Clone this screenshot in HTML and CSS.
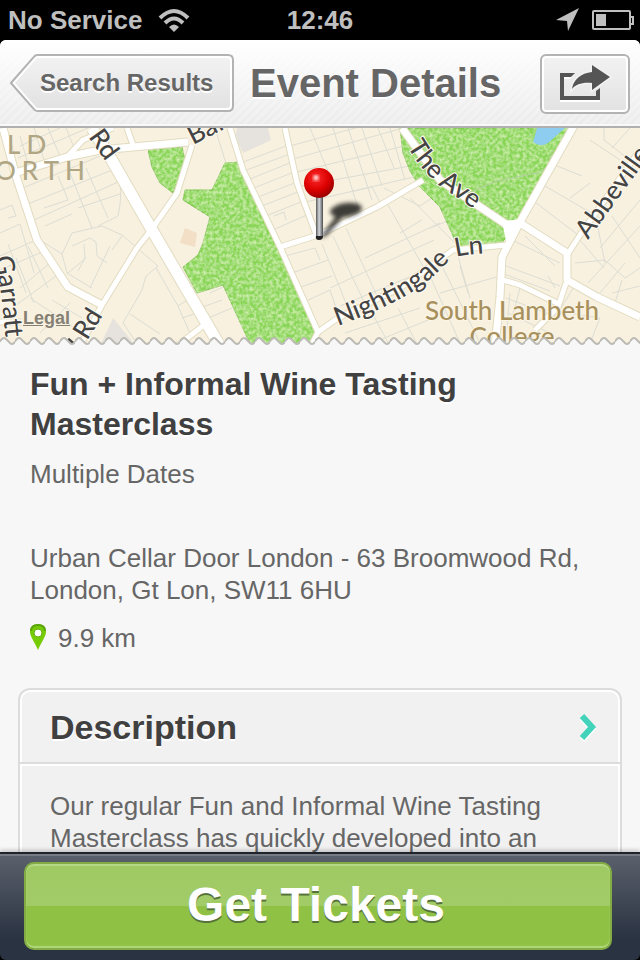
FILE: index.html
```html
<!DOCTYPE html>
<html lang="en">
<head>
    <meta charset="UTF-8">
    <meta name="viewport" content="width=device-width, initial-scale=1">
    <title>Event Details</title>
    <link rel="stylesheet" href="styles.css">
</head>
<body>

    <div class="status">
        <div class="status-left">
            <span>No Service</span>
            <svg width="34" height="26" viewBox="0 0 34 26">
                <g fill="none" stroke="#bfbfbf" stroke-width="4">
                    <path d="M2 11 Q16 -3 30 11"/>
                    <path d="M7 16 Q16 7 25 16"/>
                </g>
                <path d="M11 20 Q16 15 21 20 L16 25Z" fill="#bfbfbf"/>
            </svg>
        </div>
        <span>12:46</span>
        <div class="status-right">
            <svg width="24" height="24" viewBox="0 0 24 24"><path d="M23 0 L12 23 L11 13 L0 12Z" fill="#bfbfbf"/></svg>
            <svg width="42" height="22" viewBox="0 0 42 22">
                <rect x="1" y="2" width="37" height="18" rx="1" fill="none" stroke="#bfbfbf" stroke-width="2"/>
                <path d="M38 8h3v7h-3" fill="none" stroke="#bfbfbf" stroke-width="2"/>
                <rect x="4" y="5" width="10" height="12" fill="#bfbfbf"/>
            </svg>
        </div>
    </div>

    <header class="nav">
        <button class="back" type="button">
            <svg class="back-shape" viewBox="0 0 224 58">
                <defs>
                    <linearGradient id="btn" x1="0" y1="0" x2="0" y2="1">
                        <stop offset="0" stop-color="#f2f2f2"/>
                        <stop offset="1" stop-color="#e2e2e2"/>
                    </linearGradient>
                </defs>
                <path d="M27 1 H218 Q223 1 223 6 V52 Q223 57 218 57 H27 Q25 57 23 54 L1 29 L23 4 Q25 1 27 1Z" fill="#fff" stroke="#b3b3b3" stroke-width="2"/>
                <path d="M28 4 H217 Q220 4 220 7 V51 Q220 54 217 54 H28 Q26 54 25 52 L5 29 L25 6 Q26 4 28 4Z" fill="url(#btn)"/>
            </svg>
            <span>Search Results</span>
        </button>
        <h1>Event Details</h1>
        <button class="share" type="button" aria-label="Share">
            <svg width="54" height="42" viewBox="0 0 54 42">
                <path d="M2 12 H16 L12 16 H6 V36 H38 V29 L42 26 V39 H2Z" fill="#fff"/>
                <path d="M2 10 H17 L13 14 H6 V33 H38 V28 L42 25 V37 H2Z" fill="#555"/>
                <path d="M34 2 L52 14 L34 27 V20 C25 19 18 21 14 26 C15 17 23 10 34 9Z" fill="#555" stroke="#f2f2f2" stroke-width="3" paint-order="stroke"/>
            </svg>
        </button>
    </header>

    <div class="map">
        <svg class="map-art" viewBox="0 0 640 218" preserveAspectRatio="xMidYMin slice">
            <defs>
                <filter id="grass" x="0" y="0" width="1" height="1">
                    <feTurbulence type="fractalNoise" baseFrequency="0.3" numOctaves="2" seed="4"/>
                    <feColorMatrix values="0 0 0 0 .72  0 0 0 0 .91  0 0 0 0 .5  0 1.6 0 0 -.55"/>
                    <feComposite operator="in" in2="SourceGraphic"/>
                    <feMerge><feMergeNode in="SourceGraphic"/><feMergeNode/></feMerge>
                </filter>
                <filter id="soft"><feGaussianBlur stdDeviation="2"/></filter>
                <radialGradient id="ball" cx=".4" cy=".32" r=".7">
                    <stop offset="0" stop-color="#ffb0b0"/>
                    <stop offset=".16" stop-color="#f42020"/>
                    <stop offset=".6" stop-color="#dc0000"/>
                    <stop offset="1" stop-color="#960000"/>
                </radialGradient>
                <linearGradient id="stem">
                    <stop offset="0" stop-color="#555"/>
                    <stop offset=".45" stop-color="#d5d8dc"/>
                    <stop offset="1" stop-color="#4a4c50"/>
                </linearGradient>
                <path id="lnPath" d="M338 198 C375 184 415 168 441 141 Q452 128 466 127 L500 124"/>
                <path id="avePath" d="M407 18 Q421 43 443 60 L490 92"/>
                <path id="garPath" d="M-6 129 Q0 155 2 175 L8 235"/>
            </defs>

            <rect width="640" height="218" fill="#f8f1df"/>

            <!-- blocks -->
            <path d="M235 9 L237 0 H268 L271 12 L243 25Z M100 218 L113 190 L136 218Z" fill="#e6e2dd"/>
            <path d="M185 100 L197 105 L195 119 L180 115Z" fill="#f2dfc6"/>

            <!-- side streets -->
            <g class="minor">
                <path d="M20 18 L60 0 M18 30 L88 0 M28 36 L20 8 M44 32 L34 0 M60 28 L48 0 M75 22 L66 0 M105 18 L98 0"/>
                <path d="M23 60 L100 28 M28 76 L112 42 M34 92 L118 54 M70 45 L92 100 M58 48 L68 72 L44 80 M78 80 L120 66 M98 98 L118 88 Q122 70 120 55 M86 40 L108 90 M45 98 L72 86"/>
                <path d="M0 82 L12 77 L16 88 L8 90 M0 105 L20 96 L34 145 M0 128 L36 112 M0 142 L42 124 M20 160 L50 135 M12 180 L56 148 M8 116 L26 165 M28 118 L48 160 M16 130 L34 175"/>
                <path d="M40 112 L62 126 L72 105 L102 98 L122 107 L158 138 M62 126 L67 145 L92 160 M72 118 L90 110 L96 114 L97 128 L107 135 M84 116 L85 130 L78 143 M110 118 L90 160 M68 145 L86 130 M122 108 L112 122"/>
                <path d="M158 138 L146 148 L142 162 L123 195 L136 214 M156 140 L178 178 L192 210 M130 186 L160 206 M178 178 L190 170 M182 190 L194 186 M30 170 L75 200 M70 175 L40 205 M52 172 L82 190 M200 180 L222 172 M208 190 L232 180"/>
                <path d="M215 0 L228 42 M238 36 L286 18 M241 44 L290 26 M245 53 L292 34 M249 62 L294 44 M253 71 L297 54 M257 80 L300 63 M261 90 L303 73 M273 102 L309 86 M274 88 L284 84 L286 92 M210 165 L232 155"/>
                <path d="M290 18 L420 -18 M293 31 L403 0 M297 44 L404 18 M301 58 L410 38 M306 74 L418 48 M310 0 L330 48 M333 0 L358 80 M348 0 L372 72 M362 0 L382 58 M378 0 L394 40 M390 0 L405 52 M350 64 L372 59 L383 80"/>
                <path d="M322 116 L350 185 M333 108 L366 178 M346 100 L378 170 M388 77 L424 140 M330 160 L434 112 M340 178 L450 132 M365 130 L440 95 M400 105 L422 92 M285 128 L315 120 L320 132 M292 145 L328 132 M298 160 L332 148 M304 174 L330 162 L336 180 M384 60 L420 78 L438 66"/>
                <path d="M345 205 L420 180 M365 218 L445 185 M372 185 L390 218 M398 180 L418 218 M430 148 L460 215 M443 140 L480 215 M455 118 L470 170 M440 165 L500 148 M460 138 L468 165 M410 70 L458 118 M430 100 L450 92"/>
                <path d="M506 138 L560 158 M504 146 L550 163 M512 112 L560 135 M525 108 L555 138 M506 170 L560 190 M508 185 L550 205 M548 148 L555 160 M510 165 L506 210 M555 183 L600 190 L590 215 M575 157 L560 182 M520 160 L512 190"/>
                <path d="M552 36 L582 48 M545 58 L600 90 M535 74 L582 110 M570 70 L590 55 M604 0 V12 L640 40 M590 12 L620 32 M630 0 L612 20 M598 100 L605 135 M612 88 L640 130 M600 120 L640 72 M588 155 L640 98 M575 135 L605 132 L625 150 L640 140 M600 165 L625 135 M615 175 L622 152 M612 165 L640 158 M580 112 L604 140"/>
            </g>

            <!-- parks and pond -->
            <g fill="#89d656" stroke="#7dbf50" filter="url(#grass)">
                <path d="M148 22 L182 19 L185 32 L173 65 L160 55 L152 39Z"/>
                <path d="M225 35 L240 34 L280 119 L318 204 L311 218 H251 L223 157 L197 165 L183 139 L198 127 L203 115 L210 89 L183 72 L185 62 H212Z"/>
                <path d="M400 0 H572 L520 92 L500 117 L458 119 L440 79 L420 59 L410 43 L403 25Z"/>
            </g>
            <path d="M537 0 H565 L548 15 Q540 20 533 14Z" fill="#8fcdf0"/>
            <path d="M468 65 L497 53 L537 45 L547 39 L553 22" fill="none" stroke="#b4cfa0"/>

            <!-- main roads: casing first, then the white fill -->
            <g class="casing">
                <path class="w12" d="M92 0 L110 29 L152 102 L187 162 L220 218"/>
                <path class="w8" d="M3 0 L15 45 L37 112 L68 159 L102 177 M15 45 L67 29 L100 22 L188 14 M402 0 L440 52 L507 97 M575 -4 L520 94 L502 129 L500 169 L495 218 M520 95 L567 125 V152 L597 169 L640 189"/>
                <path class="w6" d="M67 29 L83 12 L113 0 M127 0 L133 17 M192 17 L177 65 L152 101 L137 120 L102 177 L80 218 M230 0 L243 42 L280 119 L318 204 L311 218 M285 0 L297 55 L317 109 M280 119 L318 107 L377 79 L423 52 M318 204 L338 190 L400 160 L453 122 L507 117 M567 127 L580 107 L640 22 M503 152 L520 157 L557 175 M566 155 L558 179 L535 202 M177 218 L208 194 M0 194 H22"/>
            </g>
            <g class="road">
                <path class="w12" d="M92 0 L110 29 L152 102 L187 162 L220 218"/>
                <path class="w8" d="M3 0 L15 45 L37 112 L68 159 L102 177 M15 45 L67 29 L100 22 L188 14 M402 0 L440 52 L507 97 M575 -4 L520 94 L502 129 L500 169 L495 218 M520 95 L567 125 V152 L597 169 L640 189"/>
                <path class="w6" d="M67 29 L83 12 L113 0 M127 0 L133 17 M192 17 L177 65 L152 101 L137 120 L102 177 L80 218 M230 0 L243 42 L280 119 L318 204 L311 218 M285 0 L297 55 L317 109 M280 119 L318 107 L377 79 L423 52 M318 204 L338 190 L400 160 L453 122 L507 117 M567 127 L580 107 L640 22 M503 152 L520 157 L557 175 M566 155 L558 179 L535 202 M177 218 L208 194 M0 194 H22"/>
                <path d="M503 94 L522 92 L516 104 L507 112Z" fill="#fff" stroke-width="2"/>
            </g>

            <g class="label">
                <text transform="translate(88 9) rotate(54)">Rd</text>
                <text transform="translate(193 17) rotate(-27)">Bal</text>
                <text transform="translate(87 213) rotate(-58)">Rd</text>
                <path d="M68 211 L75 217" stroke="#444" stroke-width="3"/>
                <text transform="translate(588 112) rotate(-54)">Abbeville</text>
                <text><textPath href="#lnPath">Nightingale Ln</textPath></text>
                <text><textPath href="#avePath">The Ave</textPath></text>
                <text><textPath href="#garPath">Garratt</textPath></text>
            </g>
            <g class="place">
                <text x="512" y="192" text-anchor="middle">South Lambeth</text>
                <text x="512" y="218" text-anchor="middle">College</text>
            </g>
            <g class="district">
                <text x="7" y="26">LD</text>
                <text x="-5" y="52">ORTH</text>
            </g>

            <!-- pin -->
            <g filter="url(#soft)" opacity=".75">
                <ellipse cx="346" cy="82" rx="16" ry="7" transform="rotate(-8 346 82)"/>
                <path d="M320 110 L336 88 L344 88 L326 108Z"/>
            </g>
            <path d="M316 66 H323 V109 Q319 113 316 109Z" fill="url(#stem)"/>
            <path d="M316 108 H323 Q323 112 319 112 T316 108Z" fill="#222"/>
            <circle cx="319" cy="55" r="15" fill="url(#ball)"/>
            <circle cx="316" cy="50" r="3" fill="#fff" opacity=".7" filter="url(#soft)"/>
        </svg>
        <a class="legal" href="#">Legal</a>
        <svg class="tear" width="100%" height="10">
            <defs>
                <pattern id="wave" width="15" height="10" patternUnits="userSpaceOnUse">
                    <path d="M-3 8 L2 3 Q4 1 6 3 L10 7 Q12 9 14 7 L18 3 V11 H-3Z" fill="#f7f7f7" stroke="#bdbbb6" stroke-width="2"/>
                </pattern>
            </defs>
            <rect width="100%" height="10" fill="url(#wave)"/>
        </svg>
    </div>

    <main>
        <section class="event">
            <h2>Fun + Informal Wine Tasting Masterclass</h2>
            <p class="dates">Multiple Dates</p>
            <p class="address">Urban Cellar Door London - 63 Broomwood Rd, London, Gt Lon, SW11 6HU</p>
            <p class="distance">
                <svg width="16" height="28" viewBox="0 0 16 28">
                    <path d="M8 0 C13 0 16 4 16 8 C16 12 12 17 8 26 C4 17 0 12 0 8 C0 4 3 0 8 0Z" fill="#76cc05"/>
                    <path d="M1 7 C1 3 4 1 8 1 S15 3 15 7" fill="none" stroke="#5aa30c" stroke-width="2"/>
                    <circle cx="8" cy="9" r="4" fill="#fff" stroke="#61ad0c"/>
                </svg>
                <span>9.9 km</span>
            </p>
        </section>

        <section class="card">
            <a class="card-head" href="#">
                <h3>Description</h3>
                <svg width="20" height="32" viewBox="0 0 20 32">
                    <path d="M2 7 L12 18 L2 29" fill="none" stroke="#fff" stroke-width="6"/>
                    <path d="M2 5 L12 16 L2 27" fill="none" stroke="#43d3ba" stroke-width="6"/>
                </svg>
            </a>
            <p>Our regular Fun and Informal Wine Tasting Masterclass has quickly developed into an</p>
        </section>
    </main>

    <footer>
        <button class="tickets" type="button">Get Tickets</button>
    </footer>

</body>
</html>
```
FILE: styles.css
```css
* {
    box-sizing: border-box;
}

body {
    margin: 0;
    height: 100vh;
    display: flex;
    flex-direction: column;
    background: #000;
    font-family: "Liberation Sans", Arial, sans-serif;
    color: #666;
}

h1, h2, h3, p {
    margin: 0;
}

button {
    font-family: inherit;
    cursor: pointer;
}

svg {
    display: block;
}

/* status bar */
.status {
    height: 40px;
    flex: none;
    display: grid;
    grid-template-columns: 1fr auto 1fr;
    align-items: center;
    padding: 0 8px;
    background: #000;
    color: #bfbfbf;
    font-size: 26px;
    font-weight: bold;
}

.status-left,
.status-right {
    display: flex;
    align-items: center;
    gap: 16px;
}

.status-right {
    justify-content: flex-end;
    gap: 12px;
    margin-right: -2px;
}

/* navigation bar */
.nav {
    height: 88px;
    flex: none;
    display: flex;
    align-items: flex-start;
    gap: 16px;
    padding: 14px 10px 0;
    border-bottom: 2px solid #b0b0b0;
    border-radius: 6px 6px 0 0;
    background:
        linear-gradient(rgba(255, 255, 255, 1), rgba(255, 255, 255, .2)),
        repeating-linear-gradient(135deg, #e6e6e6 0, #e6e6e6 2px, #ececec 3px, #ececec 6px);
    box-shadow: inset 0 -2px 0 #f8f8f8;
}

.back {
    position: relative;
    width: 224px;
    height: 58px;
    padding: 0 0 0 30px;
    border: 0;
    background: none;
    color: #666;
    font-size: 24px;
    font-weight: bold;
    text-align: left;
    text-shadow: 0 2px 0 #fff;
}

.back-shape {
    position: absolute;
    left: 0;
    top: 0;
    width: 100%;
}

.back span {
    position: relative;
}

.nav h1 {
    flex: 1;
    font-size: 40px;
    line-height: 58px;
    white-space: nowrap;
    text-shadow: 0 2px 0 #fff;
}

.share {
    width: 90px;
    height: 60px;
    display: flex;
    align-items: center;
    justify-content: center;
    padding: 0;
    border: 2px solid #b3b3b3;
    border-radius: 6px;
    background: linear-gradient(#f2f2f2, #e2e2e2);
    box-shadow: inset 0 0 0 2px #fff;
}

/* map */
.map {
    position: relative;
    flex: none;
    height: 218px;
    overflow: hidden;
    background: #f8f1df;
}

.map-art {
    width: 100%;
    height: 100%;
}

.minor {
    fill: none;
    stroke: #dcddd4;
    stroke-width: 1;
}

.casing,
.road {
    fill: none;
    stroke-linejoin: round;
}

.casing { stroke: #e2dcc0; }
.road { stroke: #fff; }

.casing .w12 { stroke-width: 13px; }
.casing .w8 { stroke-width: 9px; }
.casing .w6 { stroke-width: 7px; }
.road .w12 { stroke-width: 11px; }
.road .w8 { stroke-width: 7px; }
.road .w6 { stroke-width: 5px; }

.label,
.place,
.district {
    font-family: Lato, sans-serif;
    font-size: 26px;
    font-weight: 500;
    paint-order: stroke;
}

.label {
    fill: #444;
}

.label text {
    stroke: #fffaf0;
    stroke-width: 2px;
}

.place {
    fill: #a8905c;
    stroke: #fbf5e6;
    stroke-width: 2px;
}

.district {
    fill: #b0a684;
    letter-spacing: 6px;
}

.legal {
    position: absolute;
    left: 23px;
    top: 180px;
    color: #858074;
    font-size: 18px;
    font-weight: bold;
}

.tear {
    position: absolute;
    left: 0;
    bottom: 0;
}

/* event */
main {
    flex: 1;
    min-height: 0;
    overflow: hidden;
    padding: 18px 18px 0;
    background: #f7f7f7;
    font-size: 26px;
    line-height: 32px;
}

.event {
    padding: 0 12px;
}

.event h2 {
    font-size: 32px;
    line-height: 40px;
    color: #404040;
    text-shadow: 0 2px 0 #fff;
}

.dates {
    margin-top: 14px;
}

.address {
    margin-top: 52px;
}

.distance {
    display: flex;
    align-items: center;
    gap: 12px;
    margin-top: 16px;
}

.card {
    margin-top: 34px;
    border: 2px solid #dcdcdc;
    border-radius: 12px;
    background: #f1f1f1;
    box-shadow: inset 0 0 0 2px #fff;
}

.card-head {
    display: flex;
    align-items: center;
    justify-content: space-between;
    height: 74px;
    padding: 2px 20px 0 30px;
    border-bottom: 2px solid #dcdcdc;
    color: #404040;
    text-decoration: none;
}

.card h3 {
    font-size: 34px;
    text-shadow: 0 2px 0 #fff;
}

.card p {
    padding: 24px 30px 60px;
    border-top: 2px solid #fff;
}

/* bottom bar */
footer {
    position: relative;
    flex: none;
    padding: 8px 28px 10px 24px;
    border-top: 2px solid #1f242c;
    border-radius: 0 0 6px 6px;
    background: linear-gradient(#5b616c, #2a3342 80%);
    box-shadow: inset 0 2px 0 #767b84, 0 -2px 4px rgba(0, 0, 0, .2);
}

.tickets {
    display: block;
    width: 100%;
    height: 88px;
    padding: 0 4px 4px 0;
    border: 2px solid #82ac43;
    border-radius: 10px;
    background: linear-gradient(#9fc962, #a2cc68 50%, #8fc145 50%, #8fc145);
    box-shadow: inset 0 2px 1px #b5d987, inset 0 -2px 1px #b0d87b;
    color: #fff;
    font-size: 48px;
    font-weight: bold;
    text-shadow: 0 2px 0 #55713a;
}
```
